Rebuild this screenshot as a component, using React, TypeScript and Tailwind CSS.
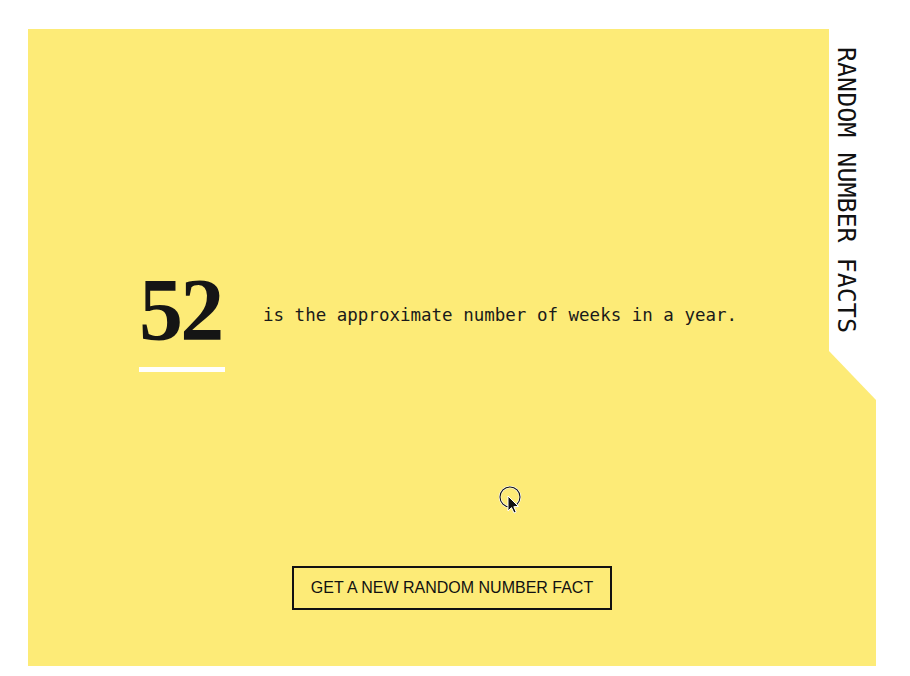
import React from 'react';

const mono = "font-['DejaVu_Sans_Mono','Liberation_Mono',monospace]";

function CursorRing() {
  return (
    <svg
      className="pointer-events-none absolute left-[497px] top-[484px]"
      width="26"
      height="32"
      viewBox="0 0 26 32"
    >
      <circle cx="13" cy="13" r="10" fill="none" stroke="#fff" strokeWidth="2.2" />
      <circle cx="13" cy="13" r="10" fill="none" stroke="#111" strokeWidth="1.1" />
      <path
        d="M11 12 L11 27 L14.5 23.6 L17 29 L19.2 28 L16.8 22.7 L21.5 22.5 Z"
        fill="#111"
        stroke="#fff"
        strokeWidth="1"
        strokeLinejoin="round"
      />
    </svg>
  );
}

export default function App() {
  return (
    <div className="relative min-h-[676px] w-[910px] bg-white pl-[28px] pt-[29px]">
      <div className="flex h-[637px] w-[848px] flex-col bg-[#fdeb77]">
        {/* top: fact + side tab */}
        <div className="flex h-[371px]">
          <div className="flex flex-1 items-start pl-[111px] pt-[237px]">
            <div className="flex flex-col">
              <span className="font-['Liberation_Serif',serif] text-[88px] font-bold leading-none tracking-[-0.03em] text-[#151515]">
                52
              </span>
              <div className="mt-[13px] h-[5px] w-[86px] bg-white" />
            </div>
            <p className={`${mono} ml-[38px] mt-[37px] text-[17.5px] leading-[24px] text-[#1a1a1a]`}>
              is the approximate number of weeks in a year.
            </p>
          </div>

          <div className="flex w-[47px] flex-col">
            <div className="flex h-[322px] bg-white pl-[5px] pt-[18px]">
              <span
                className={`${mono} text-[25px] leading-none text-[#111] [writing-mode:vertical-rl]`}
              >
                RANDOM NUMBER FACTS
              </span>
            </div>
            <svg width="47" height="49" viewBox="0 0 47 49" className="block">
              <polygon points="0,0 47,0 47,49" fill="#fff" />
            </svg>
          </div>
        </div>

        {/* action */}
        <div className="mt-[166px] flex justify-center">
          <button className="h-[44px] w-[320px] border-2 border-[#111] font-['Liberation_Sans',Arial,sans-serif] text-[16px] text-[#111]">
            GET A NEW RANDOM NUMBER FACT
          </button>
        </div>
      </div>

      <CursorRing />
    </div>
  );
}
